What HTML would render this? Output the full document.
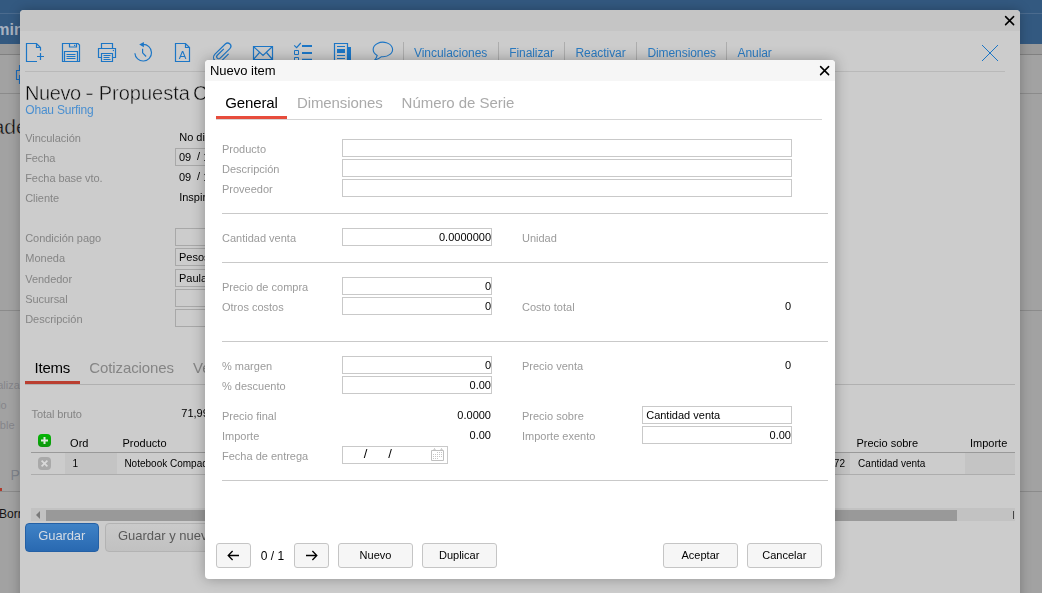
<!DOCTYPE html>
<html lang="es"><head><meta charset="utf-8"><title>Nuevo item</title>
<style>
html,body{margin:0;padding:0;}
body{width:1042px;height:593px;overflow:hidden;position:relative;background:#a2a2a2;font-family:"Liberation Sans",Arial,sans-serif;}
.t{position:absolute;white-space:nowrap;line-height:1;}
.b{position:absolute;box-sizing:border-box;}
svg{position:absolute;overflow:visible;}
#page,#dlg1,#dlg2{position:absolute;left:0;top:0;width:1042px;height:593px;overflow:hidden;}
#dlg1,#dlg2{will-change:transform;}
</style></head><body>
<div id="page">
<div class="b" style="left:0px;top:0px;width:1042px;height:44px;background:#335980;"></div>
<div class="b" style="left:0px;top:13px;width:1042px;height:1px;background:#4b6b8e;"></div>
<div class="t" style="left:-26.1px;top:22px;font-size:16px;color:#a8b2c0;font-weight:bold;">Admin</div>
<div class="b" style="left:0px;top:44px;width:1042px;height:10px;background:#9a9a9a;"></div>
<div class="b" style="left:0px;top:54px;width:1042px;height:1px;background:#808080;"></div>
<div class="b" style="left:0px;top:93px;width:1042px;height:1px;background:#8b8b8b;"></div>
<div class="b" style="left:0px;top:310px;width:1042px;height:1px;background:#8b8b8b;"></div>
<div class="b" style="left:0px;top:491px;width:1042px;height:1px;background:#8b8b8b;"></div>
<div class="t" style="left:-30.7px;top:116px;font-size:21px;color:#101010;-webkit-text-stroke:0.45px #a2a2a2;">Grade</div>
<div class="t" style="right:1022.2px;top:380px;font-size:11px;color:#85858a;">Finaliza</div>
<div class="t" style="right:1035.3px;top:400px;font-size:11px;color:#85858a;">do</div>
<div class="t" style="right:1027.5px;top:420px;font-size:11px;color:#85858a;">sible</div>
<div class="t" style="left:10.5px;top:468px;font-size:14px;color:#7f848c;">P</div>
<div class="b" style="left:0px;top:488px;width:2px;height:3px;background:#b03a2c;"></div>
<div class="t" style="left:-1px;top:508px;font-size:12px;color:#141414;">Borr</div>
<svg style="left:0;top:0" width="30" height="100"><path d="M19.5 65V70.5H16.5V79.5H19.5M19.5 75V84" fill="none" stroke="#1b6cbc" stroke-width="1.1"/></svg>
</div>
<div id="dlg1">
<div class="b" style="left:20px;top:10px;width:1000px;height:600px;background:#cccccc;border-radius:4px;box-shadow:0 0 12px rgba(0,0,0,.26);"></div>
<div class="b" style="left:20px;top:10px;width:1000px;height:21px;background:#c5c5c5;border-radius:4px 4px 0 0;"></div>
<svg style="left:1005px;top:16px" width="9" height="9"><path d="M0.6 0.6L8.6 8.6M8.6 0.6L0.6 8.6" stroke="#000" stroke-width="1.55" stroke-linecap="round" fill="none"/></svg>
<div class="b" style="left:25px;top:71px;width:980px;height:1px;background:#b9b9b9;"></div>
<svg style="left:0;top:0" width="1042" height="593" viewBox="0 0 1042 593"><path d="M40.5 50.8V47.5L36.5 43.5H26.5V61.5H37M36.5 43.5V47.5H40.5M37 56.5H44M40.5 53V60" fill="none" stroke="#1c76c6" stroke-width="1.2"/><path d="M62.5 43.5H78L79.5 45V61.5H62.5ZM69.5 43.5V47H76.5V43.5M64.5 61.5V51.5H77.5V61.5M66.5 54.5H75.5M66.5 56.5H75.5M66.5 58.5H75.5" fill="none" stroke="#1c76c6" stroke-width="1.2"/><rect x="74" y="44.8" width="1.2" height="1.2" fill="#1c76c6"/><path d="M101.5 48.5V43.5H112.5V48.5M101.5 57.5H98.5V48.5H115.5V57.5H112.5M101.5 53.5H112.5V61.5H101.5ZM103.5 55.5H110.5M103.5 57.5H109.5M103.5 59.5H110.5" fill="none" stroke="#1c76c6" stroke-width="1.2"/><rect x="112.8" y="49.9" width="1.2" height="1.2" fill="#1c76c6"/><path d="M134.9 53.2A8.3 8.3 0 1 0 143 44.4M142.6 48.8V52.8L146.1 56.5" fill="none" stroke="#1c76c6" stroke-width="1.2"/><path d="M139.2 44.6L143.9 42.1V47.2Z" fill="#1c76c6"/><path d="M175.5 43.5H185.5L189.5 47.5V61.5H175.5ZM185.5 43.5V47.5H189.5" fill="none" stroke="#1c76c6" stroke-width="1.2"/><text x="182.6" y="58.8" font-size="11.5" text-anchor="middle" fill="#1c76c6" font-family="Liberation Sans, Arial, sans-serif">A</text><g transform="translate(227.6 46.3) rotate(45.5)"><path d="M-0.85 4.5V13.6A2.05 2.05 0 0 0 3.25 13.6V0A3.25 3.25 0 0 0 -3.25 0V14.5A4.7 4.7 0 0 0 6.15 14.5V4.65" fill="none" stroke="#1c76c6" stroke-width="1.2"/></g><path d="M253.5 46.5H272.5V59.5H253.5ZM253.5 46.5L263 55.5L272.5 46.5M253.5 59.5L259.5 52.5M272.5 59.5L266.5 52.5" fill="none" stroke="#1c76c6" stroke-width="1.2"/><path d="M294.2 45.4L296.6 47.6L300.8 43" fill="none" stroke="#1c76c6" stroke-width="1.2"/><path d="M294.5 50.5H298.5V54.5H294.5ZM294.5 57.5H298.5V61.5H294.5Z" fill="none" stroke="#1c76c6" stroke-width="1"/><path d="M302 46H312M302 53H312M302 59.7H312" fill="none" stroke="#1c76c6" stroke-width="2"/><path d="M334.5 62V43.5H347.5V62M337 46.5H345M337 55.5H345M337 58.5H345" fill="none" stroke="#1c76c6" stroke-width="1.2"/><rect x="337" y="49" width="8" height="4" fill="#1c76c6"/><rect x="347.5" y="47" width="3.5" height="15" fill="#1c76c6"/><path d="M377.2 55.4A9.7 7.3 0 1 1 381.5 56.7C379.5 58.5 377 59.8 374.3 60.3C375.8 59 376.8 57.3 377.2 55.4Z" fill="none" stroke="#1c76c6" stroke-width="1.1"/><path d="M982 45L998 61M998 45L982 61" fill="none" stroke="#1c76c6" stroke-width="1"/></svg>
<div class="b" style="left:403px;top:42px;width:1px;height:20px;background:#adadad;"></div>
<div class="b" style="left:498px;top:42px;width:1px;height:20px;background:#adadad;"></div>
<div class="b" style="left:564px;top:42px;width:1px;height:20px;background:#adadad;"></div>
<div class="b" style="left:636px;top:42px;width:1px;height:20px;background:#adadad;"></div>
<div class="b" style="left:726px;top:42px;width:1px;height:20px;background:#adadad;"></div>
<div class="t" style="left:414px;top:47px;font-size:12px;color:#2b7bc2;letter-spacing:-0.041px;">Vinculaciones</div>
<div class="t" style="left:509.3px;top:47px;font-size:12px;color:#2b7bc2;letter-spacing:-0.094px;">Finalizar</div>
<div class="t" style="left:575.4px;top:47px;font-size:12px;color:#2b7bc2;letter-spacing:-0.043px;">Reactivar</div>
<div class="t" style="left:647.4px;top:47px;font-size:12px;color:#2b7bc2;letter-spacing:-0.069px;">Dimensiones</div>
<div class="t" style="left:737.5px;top:47px;font-size:12px;color:#2b7bc2;letter-spacing:-0.065px;">Anular</div>
<div class="t" style="left:25px;top:83px;font-size:20px;color:#0c0c0c;letter-spacing:-0.4px;-webkit-text-stroke:0.45px #cccccc;">Nuevo</div>
<div class="t" style="left:85px;top:83px;font-size:20px;color:#0c0c0c;transform:scaleX(1.35);transform-origin:0 0;-webkit-text-stroke:0.45px #cccccc;">-</div>
<div class="t" style="left:98.7px;top:83px;font-size:20px;color:#0c0c0c;-webkit-text-stroke:0.45px #cccccc;">Propuesta</div>
<div class="t" style="left:193px;top:83px;font-size:20px;color:#0c0c0c;-webkit-text-stroke:0.45px #cccccc;">Comercial</div>
<div class="t" style="left:25.3px;top:104px;font-size:12px;color:#4a8fd0;letter-spacing:-0.209px;">Ohau Surfing</div>
<div class="t" style="left:25.2px;top:133px;font-size:11px;color:#858585;letter-spacing:-0.033px;">Vinculación</div>
<div class="t" style="left:25.2px;top:153px;font-size:11px;color:#858585;letter-spacing:-0.094px;">Fecha</div>
<div class="t" style="left:25.2px;top:173px;font-size:11px;color:#858585;letter-spacing:-0.058px;">Fecha base vto.</div>
<div class="t" style="left:25.2px;top:193px;font-size:11px;color:#858585;letter-spacing:-0.063px;">Cliente</div>
<div class="t" style="left:25.2px;top:233px;font-size:11px;color:#858585;letter-spacing:-0.032px;">Condición pago</div>
<div class="t" style="left:25.2px;top:253px;font-size:11px;color:#858585;letter-spacing:0.025px;">Moneda</div>
<div class="t" style="left:25.2px;top:274px;font-size:11px;color:#858585;letter-spacing:-0.025px;">Vendedor</div>
<div class="t" style="left:25.2px;top:294px;font-size:11px;color:#858585;letter-spacing:-0.050px;">Sucursal</div>
<div class="t" style="left:25.2px;top:314px;font-size:11px;color:#858585;letter-spacing:-0.015px;">Descripción</div>
<div class="t" style="left:179.2px;top:132px;font-size:11px;color:#000;">No disponible</div>
<div class="b" style="left:175px;top:148px;width:110px;height:18px;border:1px solid #a8a8a8;background:#cccccc;"></div>
<div class="t" style="left:179px;top:152px;font-size:11px;color:#000;">09</div>
<div class="t" style="left:197px;top:151px;font-size:11px;color:#000;">/</div>
<div class="t" style="left:203.3px;top:152px;font-size:11px;color:#000;">10</div>
<div class="t" style="left:221px;top:151px;font-size:11px;color:#000;">/</div>
<div class="t" style="left:227px;top:152px;font-size:11px;color:#000;">2023</div>
<div class="t" style="left:179px;top:172px;font-size:11px;color:#000;">09</div>
<div class="t" style="left:197px;top:171px;font-size:11px;color:#000;">/</div>
<div class="t" style="left:203.3px;top:172px;font-size:11px;color:#000;">10</div>
<div class="t" style="left:221px;top:171px;font-size:11px;color:#000;">/</div>
<div class="t" style="left:227px;top:172px;font-size:11px;color:#000;">2023</div>
<div class="t" style="left:179.2px;top:192px;font-size:11px;color:#000;">Inspire Consulting</div>
<div class="b" style="left:175px;top:228px;width:200px;height:18px;border:1px solid #a8a8a8;background:#cccccc;"></div>
<div class="b" style="left:175px;top:248px;width:200px;height:18px;border:1px solid #a8a8a8;background:#cccccc;"></div>
<div class="t" style="left:179px;top:252px;font-size:11px;color:#000;">Pesos</div>
<div class="b" style="left:175px;top:269px;width:200px;height:18px;border:1px solid #a8a8a8;background:#cccccc;"></div>
<div class="t" style="left:179px;top:273px;font-size:11px;color:#000;">Paula Gomez</div>
<div class="b" style="left:175px;top:289px;width:200px;height:18px;border:1px solid #a8a8a8;background:#cccccc;"></div>
<div class="b" style="left:175px;top:309px;width:400px;height:18px;border:1px solid #a8a8a8;background:#cccccc;"></div>
<div class="t" style="left:34.6px;top:360px;font-size:15px;color:#000;letter-spacing:-0.234px;">Items</div>
<div class="t" style="left:89.2px;top:360px;font-size:15px;color:#858585;letter-spacing:-0.090px;">Cotizaciones</div>
<div class="t" style="left:193.1px;top:360px;font-size:15px;color:#858585;">Vencimientos</div>
<div class="b" style="left:25px;top:381px;width:55px;height:3px;background:#ba3e30;"></div>
<div class="b" style="left:25px;top:384px;width:990px;height:1px;background:#b0b0b0;"></div>
<div class="t" style="left:31.6px;top:409px;font-size:11px;color:#858585;letter-spacing:-0.106px;">Total bruto</div>
<div class="t" style="left:181.3px;top:408px;font-size:11px;color:#000;">71,999.00</div>
<div class="b" style="left:38px;top:434px;width:13px;height:13px;background:linear-gradient(#03b603,#0d960d);border-radius:4px;"></div>
<svg style="left:38px;top:434px" width="13" height="13"><path d="M3 6.5H10M6.5 3V10" stroke="#dfe9df" stroke-width="2" fill="none"/></svg>
<div class="t" style="left:70.1px;top:438px;font-size:11px;color:#000;">Ord</div>
<div class="t" style="left:122.5px;top:438px;font-size:11px;color:#000;">Producto</div>
<div class="t" style="left:856.4px;top:438px;font-size:11px;color:#000;">Precio sobre</div>
<div class="t" style="left:970px;top:438px;font-size:11px;color:#000;">Importe</div>
<div class="b" style="left:31px;top:452px;width:984px;height:1px;background:#999;"></div>
<div class="b" style="left:31px;top:474px;width:984px;height:1px;background:#adadad;"></div>
<div class="b" style="left:38px;top:457px;width:13px;height:13px;background:#a9a9a9;border-radius:4px;"></div>
<svg style="left:38px;top:457px" width="13" height="13"><path d="M3.6 3.6L9.4 9.4M9.4 3.6L3.6 9.4" stroke="#dadada" stroke-width="1.7" fill="none"/></svg>
<div class="b" style="left:65px;top:453px;width:52px;height:21px;background:#c4c4c4;"></div>
<div class="t" style="left:72.4px;top:459px;font-size:10px;color:#000;">1</div>
<div class="t" style="left:124.4px;top:459px;font-size:10px;color:#000;">Notebook Compaq</div>
<div class="b" style="left:800px;top:453px;width:50px;height:21px;background:#c4c4c4;"></div>
<div class="t" style="right:197px;top:459px;font-size:10px;color:#000;">71,999.72</div>
<div class="t" style="left:858.1px;top:459px;font-size:10px;color:#000;">Cantidad venta</div>
<div class="b" style="left:965px;top:453px;width:50px;height:21px;background:#c4c4c4;"></div>
<div class="b" style="left:31px;top:508px;width:984px;height:13px;background:#c2c2c2;"></div>
<div class="b" style="left:46px;top:510px;width:911px;height:11px;background:#999;"></div>
<svg style="left:35px;top:510px" width="6" height="10"><path d="M5 1V9L1 5Z" fill="#7a7a7a"/></svg>
<div class="b" style="left:1013px;top:511px;width:1px;height:8px;background:#444;"></div>
<div class="b" style="left:25px;top:523px;width:74px;height:29px;background:linear-gradient(#3f82c6,#2969b1);border:1px solid #2460a5;border-radius:4px;"></div>
<div class="t" style="left:38.3px;top:529px;font-size:13px;color:#d3dbe4;letter-spacing:-0.127px;">Guardar</div>
<div class="b" style="left:105px;top:523px;width:150px;height:29px;background:linear-gradient(#cacaca,#c1c1c1);border:1px solid #b3b3b3;border-radius:4px;"></div>
<div class="t" style="left:117.9px;top:529px;font-size:13px;color:#595959;">Guardar y nuevo</div>
</div>
<div id="dlg2">
<div class="b" style="left:205px;top:60px;width:630px;height:519px;background:#fff;border-radius:4px;box-shadow:0 0 14px rgba(0,0,0,.3);"></div>
<div class="b" style="left:205px;top:60px;width:630px;height:21px;background:#f6f6f6;border-radius:4px 4px 0 0;"></div>
<div class="t" style="left:210px;top:64px;font-size:13px;color:#000;letter-spacing:-0.015px;">Nuevo item</div>
<svg style="left:820px;top:66px" width="9" height="9"><path d="M0.6 0.6L8.6 8.6M8.6 0.6L0.6 8.6" stroke="#000" stroke-width="1.55" stroke-linecap="round" fill="none"/></svg>
<div class="t" style="left:225.2px;top:95px;font-size:15px;color:#000;letter-spacing:-0.109px;">General</div>
<div class="t" style="left:297px;top:95px;font-size:15px;color:#aaa;letter-spacing:-0.100px;">Dimensiones</div>
<div class="t" style="left:401.6px;top:95px;font-size:15px;color:#aaa;letter-spacing:-0.046px;">Número de Serie</div>
<div class="b" style="left:216px;top:116px;width:71px;height:3px;background:#e74c3c;"></div>
<div class="b" style="left:216px;top:119px;width:606px;height:1px;background:#d5d5d5;"></div>
<div class="t" style="left:222px;top:144px;font-size:11px;color:#9b9b9b;">Producto</div>
<div class="t" style="left:222px;top:164px;font-size:11px;color:#9b9b9b;">Descripción</div>
<div class="t" style="left:222px;top:184px;font-size:11px;color:#9b9b9b;">Proveedor</div>
<div class="t" style="left:222px;top:233px;font-size:11px;color:#9b9b9b;">Cantidad venta</div>
<div class="t" style="left:222px;top:282px;font-size:11px;color:#9b9b9b;">Precio de compra</div>
<div class="t" style="left:222px;top:302px;font-size:11px;color:#9b9b9b;">Otros costos</div>
<div class="t" style="left:222px;top:361px;font-size:11px;color:#9b9b9b;">% margen</div>
<div class="t" style="left:222px;top:381px;font-size:11px;color:#9b9b9b;">% descuento</div>
<div class="t" style="left:222px;top:411px;font-size:11px;color:#9b9b9b;">Precio final</div>
<div class="t" style="left:222px;top:431px;font-size:11px;color:#9b9b9b;">Importe</div>
<div class="t" style="left:222px;top:451px;font-size:11px;color:#9b9b9b;">Fecha de entrega</div>
<div class="t" style="left:522px;top:233px;font-size:11px;color:#9b9b9b;">Unidad</div>
<div class="t" style="left:522px;top:302px;font-size:11px;color:#9b9b9b;">Costo total</div>
<div class="t" style="left:522px;top:361px;font-size:11px;color:#9b9b9b;">Precio venta</div>
<div class="t" style="left:522px;top:411px;font-size:11px;color:#9b9b9b;">Precio sobre</div>
<div class="t" style="left:522px;top:431px;font-size:11px;color:#9b9b9b;">Importe exento</div>
<div class="b" style="left:342px;top:139px;width:450px;height:18px;border:1px solid #c9c9c9;background:#fff;"></div>
<div class="b" style="left:342px;top:159px;width:450px;height:18px;border:1px solid #c9c9c9;background:#fff;"></div>
<div class="b" style="left:342px;top:179px;width:450px;height:18px;border:1px solid #c9c9c9;background:#fff;"></div>
<div class="b" style="left:342px;top:228px;width:150px;height:18px;border:1px solid #c9c9c9;background:#fff;"></div>
<div class="b" style="left:342px;top:277px;width:150px;height:18px;border:1px solid #c9c9c9;background:#fff;"></div>
<div class="b" style="left:342px;top:297px;width:150px;height:18px;border:1px solid #c9c9c9;background:#fff;"></div>
<div class="b" style="left:342px;top:356px;width:150px;height:18px;border:1px solid #c9c9c9;background:#fff;"></div>
<div class="b" style="left:342px;top:376px;width:150px;height:18px;border:1px solid #c9c9c9;background:#fff;"></div>
<div class="b" style="left:342px;top:446px;width:106px;height:18px;border:1px solid #c9c9c9;background:#fff;"></div>
<div class="b" style="left:642px;top:406px;width:150px;height:18px;border:1px solid #c9c9c9;background:#fff;"></div>
<div class="b" style="left:642px;top:426px;width:150px;height:18px;border:1px solid #c9c9c9;background:#fff;"></div>
<div class="b" style="left:222px;top:213px;width:606px;height:1px;background:#c9c9c9;"></div>
<div class="b" style="left:222px;top:262px;width:606px;height:1px;background:#c9c9c9;"></div>
<div class="b" style="left:222px;top:341px;width:606px;height:1px;background:#c9c9c9;"></div>
<div class="b" style="left:222px;top:480px;width:606px;height:1px;background:#c9c9c9;"></div>
<div class="t" style="right:551px;top:232px;font-size:11px;color:#000;">0.0000000</div>
<div class="t" style="right:551px;top:281px;font-size:11px;color:#000;">0</div>
<div class="t" style="right:551px;top:301px;font-size:11px;color:#000;">0</div>
<div class="t" style="right:551px;top:360px;font-size:11px;color:#000;">0</div>
<div class="t" style="right:551px;top:380px;font-size:11px;color:#000;">0.00</div>
<div class="t" style="right:551px;top:410px;font-size:11px;color:#000;">0.0000</div>
<div class="t" style="right:551px;top:430px;font-size:11px;color:#000;">0.00</div>
<div class="t" style="right:250.8px;top:301px;font-size:11px;color:#000;">0</div>
<div class="t" style="right:250.8px;top:360px;font-size:11px;color:#000;">0</div>
<div class="t" style="right:251px;top:430px;font-size:11px;color:#000;">0.00</div>
<div class="t" style="left:646.2px;top:410px;font-size:11px;color:#000;">Cantidad venta</div>
<div class="t" style="left:363.8px;top:447px;font-size:13px;color:#000;">/</div>
<div class="t" style="left:388.2px;top:447px;font-size:13px;color:#000;">/</div>
<svg style="left:0;top:0" width="1042" height="593"><path d="M431.5 450.5H443.5V460.5H431.5ZM433.5 450.5L434.5 448.5L435.5 450.5M440.5 450.5L441.5 448.5L442.5 450.5" fill="none" stroke="#c0c0c0" stroke-width="1"/><rect x="437" y="452" width="1" height="1" fill="#c6c6c6"/><rect x="439" y="452" width="1" height="1" fill="#c6c6c6"/><rect x="441" y="452" width="1" height="1" fill="#c6c6c6"/><rect x="433" y="454" width="1" height="1" fill="#c6c6c6"/><rect x="435" y="454" width="1" height="1" fill="#c6c6c6"/><rect x="437" y="454" width="1" height="1" fill="#c6c6c6"/><rect x="439" y="454" width="1" height="1" fill="#c6c6c6"/><rect x="441" y="454" width="1" height="1" fill="#c6c6c6"/><rect x="433" y="456" width="1" height="1" fill="#c6c6c6"/><rect x="435" y="456" width="1" height="1" fill="#c6c6c6"/><rect x="437" y="456" width="1" height="1" fill="#c6c6c6"/><rect x="439" y="456" width="1" height="1" fill="#c6c6c6"/><rect x="441" y="456" width="1" height="1" fill="#c6c6c6"/><rect x="433" y="458" width="1" height="1" fill="#c6c6c6"/><rect x="435" y="458" width="1" height="1" fill="#c6c6c6"/><rect x="437" y="458" width="1" height="1" fill="#c6c6c6"/></svg>
<div class="b" style="left:216px;top:543px;width:35px;height:25px;background:#f6f6f6;border:1px solid #c5c5c5;border-radius:3px;"></div>
<div class="b" style="left:294px;top:543px;width:35px;height:25px;background:#f6f6f6;border:1px solid #c5c5c5;border-radius:3px;"></div>
<div class="b" style="left:338px;top:543px;width:75px;height:25px;background:#f6f6f6;border:1px solid #c5c5c5;border-radius:3px;"></div>
<div class="t" style="left:359.6px;top:550px;font-size:11px;color:#000;">Nuevo</div>
<div class="b" style="left:422px;top:543px;width:75px;height:25px;background:#f6f6f6;border:1px solid #c5c5c5;border-radius:3px;"></div>
<div class="t" style="left:439px;top:550px;font-size:11px;color:#000;">Duplicar</div>
<div class="b" style="left:663px;top:543px;width:75px;height:25px;background:#f6f6f6;border:1px solid #c5c5c5;border-radius:3px;"></div>
<div class="t" style="left:681.5px;top:550px;font-size:11px;color:#000;">Aceptar</div>
<div class="b" style="left:747px;top:543px;width:75px;height:25px;background:#f6f6f6;border:1px solid #c5c5c5;border-radius:3px;"></div>
<div class="t" style="left:762.3px;top:550px;font-size:11px;color:#000;">Cancelar</div>
<div class="t" style="left:260.8px;top:550px;font-size:12px;color:#000;">0 / 1</div>
<svg style="left:0;top:0" width="1042" height="593"><path d="M239 555.5H228.2M232.6 551L228.2 555.5L232.6 560" fill="none" stroke="#000" stroke-width="1.3"/><path d="M306 555.5H316.8M312.4 551L316.8 555.5L312.4 560" fill="none" stroke="#000" stroke-width="1.3"/></svg>
</div>
</body></html>
